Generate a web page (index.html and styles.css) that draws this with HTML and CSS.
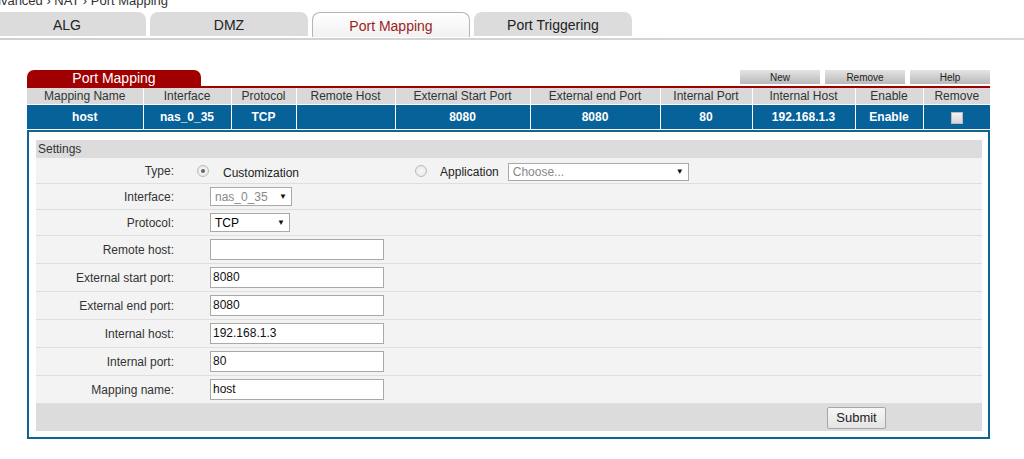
FILE: index.html
```html
<!DOCTYPE html>
<html>
<head>
<meta charset="utf-8">
<link rel="stylesheet" href="styles.css">
</head>
<body>
<div class="crumb">Advanced › NAT › Port Mapping</div>
<div class="tabs">
  <div class="tab">ALG</div>
  <div class="tab">DMZ</div>
  <div class="tab active">Port Mapping</div>
  <div class="tab">Port Triggering</div>
</div>
<div class="tabline"></div>

<div class="main">
  <div class="titlebar">
    <div class="redtab">Port Mapping</div>
    <div class="btns">
      <div class="gbtn">New</div>
      <div class="gbtn">Remove</div>
      <div class="gbtn">Help</div>
    </div>
  </div>
  <table class="list">
    <colgroup>
      <col class="c1"><col class="c2"><col class="c3"><col class="c4"><col class="c5">
      <col class="c6"><col class="c7"><col class="c8"><col class="c9"><col class="c10">
    </colgroup>
    <tr class="hdr">
      <th>Mapping Name</th><th>Interface</th><th>Protocol</th><th>Remote Host</th><th>External Start Port</th>
      <th>External end Port</th><th>Internal Port</th><th>Internal Host</th><th>Enable</th><th>Remove</th>
    </tr>
    <tr class="data">
      <td>host</td><td>nas_0_35</td><td>TCP</td><td></td><td>8080</td>
      <td>8080</td><td>80</td><td>192.168.1.3</td><td>Enable</td><td><span class="chk"></span></td>
    </tr>
  </table>

  <div class="box">
    <div class="panel">
      <div class="phead">Settings</div>
      <div class="row short">
        <div class="lbl">Type:</div>
        <div class="val typeval">
          <span class="radio on"></span><span class="rtext">Customization</span>
          <span class="radio app"></span><span class="rtext2">Application</span>
          <div class="sel appsel"><span class="ph">Choose...</span><span class="arr">▼</span></div>
        </div>
      </div>
      <div class="row short">
        <div class="lbl">Interface:</div>
        <div class="val"><div class="sel ifsel"><span class="ph">nas_0_35</span><span class="arr">▼</span></div></div>
      </div>
      <div class="row short">
        <div class="lbl">Protocol:</div>
        <div class="val"><div class="sel prsel"><span>TCP</span><span class="arr">▼</span></div></div>
      </div>
      <div class="row">
        <div class="lbl">Remote host:</div>
        <div class="val"><div class="inp"></div></div>
      </div>
      <div class="row">
        <div class="lbl">External start port:</div>
        <div class="val"><div class="inp">8080</div></div>
      </div>
      <div class="row">
        <div class="lbl">External end port:</div>
        <div class="val"><div class="inp">8080</div></div>
      </div>
      <div class="row">
        <div class="lbl">Internal host:</div>
        <div class="val"><div class="inp">192.168.1.3</div></div>
      </div>
      <div class="row">
        <div class="lbl">Internal port:</div>
        <div class="val"><div class="inp">80</div></div>
      </div>
      <div class="row">
        <div class="lbl">Mapping name:</div>
        <div class="val"><div class="inp">host</div></div>
      </div>
      <div class="pfoot"><div class="submit">Submit</div></div>
    </div>
  </div>
</div>
</body>
</html>
```

FILE: styles.css
```css
html, body {
  margin: 0;
  padding: 0;
  background: #fff;
  font-family: "Liberation Sans", Arial, sans-serif;
  color: #333;
  overflow: hidden;
}
.crumb {
  font-size: 13px;
  height: 11px;
  line-height: 11px;
  margin-left: -15px;
  margin-top: -5px;
  margin-bottom: 6px;
  color: #333;
  white-space: nowrap;
}
.tabs {
  display: flex;
  gap: 4px;
  margin-left: -12px;
  height: 24px;
}
.tab {
  width: 158px;
  height: 24px;
  box-sizing: border-box;
  background: #dcdcdc;
  border-radius: 8px 8px 0 0;
  text-align: center;
  font-size: 14px;
  line-height: 27px;
  color: #222;
}
.tab.active {
  background: linear-gradient(#ffffff, #f1f1f1);
  border: 1px solid #b5b5b5;
  border-bottom: none;
  height: 25px;
  color: #9b1d1d;
  line-height: 26px;
}
.tabline {
  margin-top: 2px;
  height: 2px;
  background: linear-gradient(90deg, #cfcfcf, #d8d8d8);
}
.main {
  margin: 30px 0 0 27px;
  width: 963px;
}
.titlebar {
  display: flex;
  justify-content: space-between;
  align-items: flex-end;
  border-bottom: 2px solid #a00000;
  height: 16px;
}
.redtab {
  width: 174px;
  height: 17px;
  margin-bottom: -1px;
  background: #a00000;
  border-radius: 7px 7px 0 0;
  color: #fff;
  font-size: 14px;
  line-height: 17px;
  text-align: center;
}
.btns {
  display: flex;
  gap: 5px;
  align-self: flex-start;
}
.gbtn {
  width: 80px;
  height: 14px;
  background: linear-gradient(#e4e4e4, #b9b9b9);
  font-size: 10px;
  line-height: 15px;
  text-align: center;
  color: #222;
}
.list {
  width: 963px;
  border-collapse: collapse;
  table-layout: fixed;
  font-size: 12px;
}
.c1 { width: 116px; } .c2 { width: 88px; } .c3 { width: 65px; } .c4 { width: 99px; }
.c5 { width: 135px; } .c6 { width: 130px; } .c7 { width: 92px; } .c8 { width: 103px; }
.c9 { width: 68px; } .c10 { width: 67px; }
.list th, .list td {
  border-left: 1px solid #fff;
  padding: 0;
  text-align: center;
}
.list th:first-child, .list td:first-child { border-left: none; }
.hdr th {
  background: #d9d9d9;
  font-weight: normal;
  color: #333;
  height: 16px;
  line-height: 16px;
}
.data td {
  background: #07629a;
  color: #fff;
  font-weight: bold;
  height: 24px;
  border-top: 1px solid #fff;
  border-bottom: 1px solid #fff;
}
.chk {
  display: inline-block;
  width: 10px;
  height: 10px;
  background: linear-gradient(#f2f2f2, #d6d6d6);
  border: 1px solid #bbb;
  vertical-align: middle;
}
.box {
  border: 2px solid #0e6690;
  padding: 8px 6px 6px 7px;
  background: #fff;
}
.panel {
  background: #f3f3f3;
  font-size: 12px;
}
.phead {
  background: #dcdcdc;
  height: 18px;
  line-height: 18px;
  padding-left: 2px;
  color: #333;
}
.row {
  display: flex;
  align-items: center;
  height: 27px;
  border-bottom: 1px solid #dedede;
}
.row.short { height: 25px; }
.lbl {
  width: 138px;
  text-align: right;
  color: #333;
}
.val {
  margin-left: 36px;
  display: flex;
  align-items: center;
}
.typeval { margin-left: 23px; }
.radio {
  display: inline-block;
  width: 10px;
  height: 10px;
  border-radius: 50%;
  border: 1px solid #bbb;
  background: radial-gradient(circle, #fafafa 0, #e2e2e2 100%);
  box-sizing: content-box;
  position: relative;
}
.radio.on::after {
  content: "";
  position: absolute;
  left: 3px;
  top: 3px;
  width: 4px;
  height: 4px;
  border-radius: 50%;
  background: #666;
}
.rtext { margin-left: 14px; margin-top: 4px; color: #222; }
.radio.app { margin-left: 116px; }
.rtext2 { margin-left: 13px; margin-top: 2px; color: #222; }
.sel {
  display: flex;
  justify-content: space-between;
  align-items: center;
  box-sizing: border-box;
  border: 1px solid #a9a9a9;
  background: #fff;
  padding: 0 4px 0 4px;
  color: #000;
  font-size: 12px;
}
.sel .ph { color: #888; }
.sel .arr { font-size: 8px; color: #111; }
.appsel { width: 181px; height: 18px; margin-left: 9px; margin-top: 2px; }
.ifsel { width: 82px; height: 19px; }
.prsel { width: 80px; height: 19px; }
.inp {
  width: 174px;
  height: 21px;
  box-sizing: border-box;
  border: 1px solid #a9a9a9;
  background: #fff;
  padding-left: 2px;
  line-height: 19px;
  color: #111;
  font-size: 12px;
}
.pfoot {
  background: #dcdcdc;
  height: 27px;
  display: flex;
  align-items: center;
  justify-content: flex-end;
  padding-right: 96px;
}
.submit {
  width: 59px;
  height: 22px;
  box-sizing: border-box;
  border: 1px solid #a6a6a6;
  border-radius: 2px;
  background: linear-gradient(#f6f6f6, #e4e4e4);
  font-size: 13px;
  line-height: 20px;
  text-align: center;
  color: #222;
}
```
